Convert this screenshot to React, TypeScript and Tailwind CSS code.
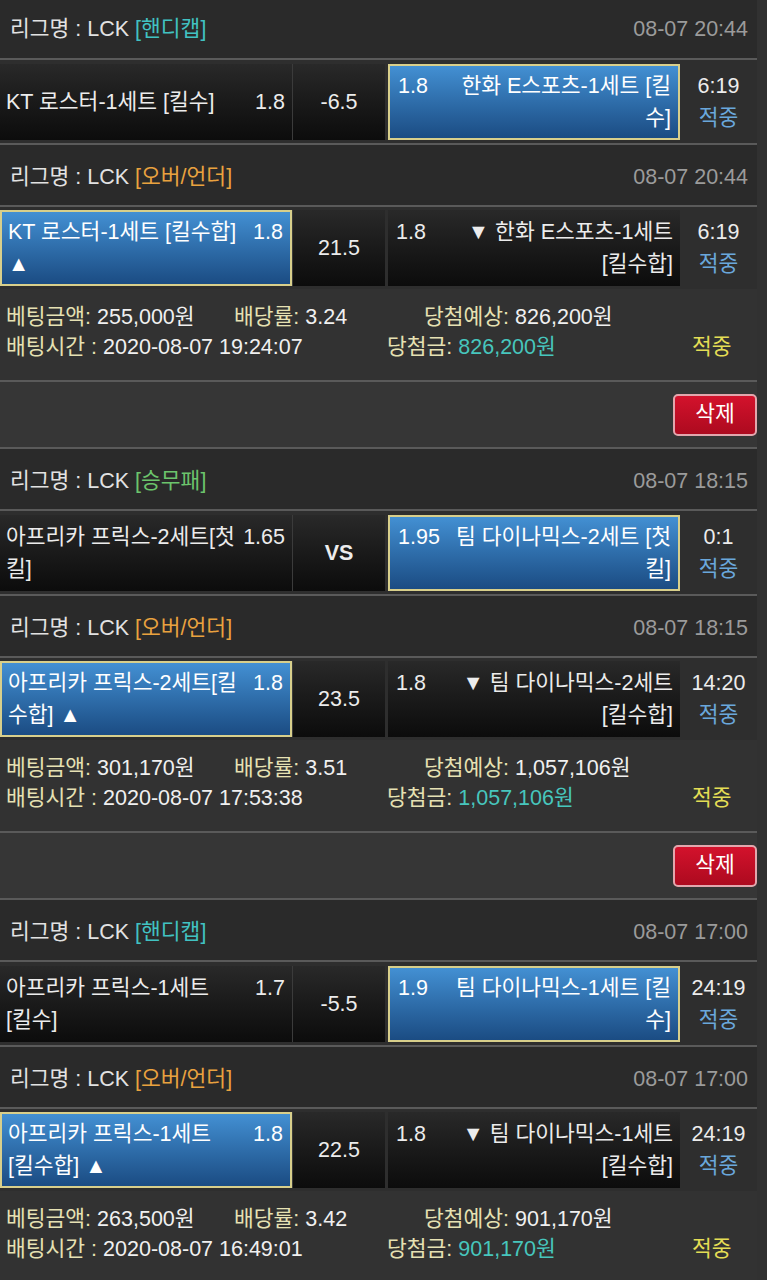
import React from 'react';

type Match = {
  tag: string;
  tagClass: string;
  date: string;
  left: string[];
  leftOdds: string;
  center: string;
  bold?: boolean;
  right: string[];
  rightOdds: string;
  pick: 'left' | 'right';
  score: string;
};

type Info = {
  amount: string;
  rate: string;
  expect: string;
  time: string;
  win: string;
};

type Block = { matches: [Match, Match]; info: Info };

const TEAL = 'text-[#41c2c2]';
const ORANGE = 'text-[#e9a23f]';
const GREEN = 'text-[#6cc46c]';

const blocks: Block[] = [
  {
    matches: [
      {
        tag: '핸디캡', tagClass: TEAL, date: '08-07 20:44',
        left: ['KT 로스터-1세트 [킬수]'], leftOdds: '1.8', center: '-6.5',
        right: ['한화 E스포츠-1세트 [킬', '수]'], rightOdds: '1.8', pick: 'right', score: '6:19',
      },
      {
        tag: '오버/언더', tagClass: ORANGE, date: '08-07 20:44',
        left: ['KT 로스터-1세트 [킬수합]', '▲'], leftOdds: '1.8', center: '21.5',
        right: ['▼ 한화 E스포츠-1세트', '[킬수합]'], rightOdds: '1.8', pick: 'left', score: '6:19',
      },
    ],
    info: { amount: '255,000원', rate: '3.24', expect: '826,200원', time: '2020-08-07 19:24:07', win: '826,200원' },
  },
  {
    matches: [
      {
        tag: '승무패', tagClass: GREEN, date: '08-07 18:15',
        left: ['아프리카 프릭스-2세트[첫', '킬]'], leftOdds: '1.65', center: 'VS', bold: true,
        right: ['팀 다이나믹스-2세트 [첫', '킬]'], rightOdds: '1.95', pick: 'right', score: '0:1',
      },
      {
        tag: '오버/언더', tagClass: ORANGE, date: '08-07 18:15',
        left: ['아프리카 프릭스-2세트[킬', '수합] ▲'], leftOdds: '1.8', center: '23.5',
        right: ['▼ 팀 다이나믹스-2세트', '[킬수합]'], rightOdds: '1.8', pick: 'left', score: '14:20',
      },
    ],
    info: { amount: '301,170원', rate: '3.51', expect: '1,057,106원', time: '2020-08-07 17:53:38', win: '1,057,106원' },
  },
  {
    matches: [
      {
        tag: '핸디캡', tagClass: TEAL, date: '08-07 17:00',
        left: ['아프리카 프릭스-1세트', '[킬수]'], leftOdds: '1.7', center: '-5.5',
        right: ['팀 다이나믹스-1세트 [킬', '수]'], rightOdds: '1.9', pick: 'right', score: '24:19',
      },
      {
        tag: '오버/언더', tagClass: ORANGE, date: '08-07 17:00',
        left: ['아프리카 프릭스-1세트', '[킬수합] ▲'], leftOdds: '1.8', center: '22.5',
        right: ['▼ 팀 다이나믹스-1세트', '[킬수합]'], rightOdds: '1.8', pick: 'left', score: '24:19',
      },
    ],
    info: { amount: '263,500원', rate: '3.42', expect: '901,170원', time: '2020-08-07 16:49:01', win: '901,170원' },
  },
];

const DARK = 'bg-linear-to-b from-[#292929] to-[#0c0c0c] text-[#ececec]';
const BLUE = 'border-2 border-[#d8cf8b] bg-linear-to-b from-[#4390d3] to-[#1b4c83] text-white';

const Header: React.FC<{ m: Match; first?: boolean }> = ({ m, first }) => (
  <div
    className={`flex items-center justify-between border-b-2 border-[#5a5a5a] bg-[#2a2a2a] pl-[10px] pr-[9px] ${first ? 'h-[60px] pt-[1px]' : 'h-[62px] pt-[4px]'}`}
  >
    <span className="text-[#e2e2e2]">
      리그명 : LCK <span className={m.tagClass}>[{m.tag}]</span>
    </span>
    <span className="text-[#9b9b9b]">{m.date}</span>
  </div>
);

const MatchRow: React.FC<{ m: Match; bordered: boolean }> = ({ m, bordered }) => (
  <div
    className={`flex items-center bg-[#2e2e2e] leading-[32px] ${bordered ? 'h-[85px] border-b-2 border-[#5a5a5a]' : 'h-[82px]'}`}
  >
    {/* home side */}
    <div className={`flex h-[76px] w-[292px] items-center ${m.pick === 'left' ? BLUE : DARK}`}>
      <div className="flex w-full items-start justify-between pl-[6px] pr-[7px]">
        <div className="whitespace-nowrap">
          {m.left.map((l) => (
            <div key={l}>{l}</div>
          ))}
        </div>
        <div>{m.leftOdds}</div>
      </div>
    </div>
    {/* handicap / total */}
    <div
      className={`flex h-[76px] w-[93px] items-center justify-center border-l border-[#3b3b3b] ${DARK} ${m.bold ? 'font-bold' : ''}`}
    >
      {m.center}
    </div>
    {/* away side */}
    <div className={`ml-[3px] flex h-[76px] w-[292px] items-center ${m.pick === 'right' ? BLUE : DARK}`}>
      <div className="flex w-full items-start justify-between pl-[8px] pr-[7px]">
        <div>{m.rightOdds}</div>
        <div className="whitespace-nowrap text-right">
          {m.right.map((l) => (
            <div key={l}>{l}</div>
          ))}
        </div>
      </div>
    </div>
    <div className="flex w-[77px] flex-col items-center">
      <span className="text-[#ececec]">{m.score}</span>
      <span className="text-[#6aa7db]">적중</span>
    </div>
  </div>
);

const Label: React.FC<{ children: React.ReactNode }> = ({ children }) => (
  <span className="text-[#e6e1b3]">{children}</span>
);

const InfoRows: React.FC<{ info: Info; last: boolean }> = ({ info, last }) => (
  <div
    className={`bg-[#323232] px-[6px] pt-[13px] leading-[30px] text-[#f0f0f0] ${last ? 'pb-[30px]' : 'border-b-2 border-[#5a5a5a] pb-[18px]'}`}
  >
    <div className="flex whitespace-nowrap">
      <span className="w-[228px]">
        <Label>베팅금액:</Label> {info.amount}
      </span>
      <span className="w-[190px]">
        <Label>배당률:</Label> {info.rate}
      </span>
      <span>
        <Label>당첨예상:</Label> {info.expect}
      </span>
    </div>
    <div className="flex whitespace-nowrap">
      <span className="w-[381px]">
        <Label>배팅시간 :</Label> {info.time}
      </span>
      <span className="w-[305px]">
        <Label>당첨금:</Label> <span className="text-[#47c6bd]">{info.win}</span>
      </span>
      <span className="text-[#e4dd55]">적중</span>
    </div>
  </div>
);

const DeleteRow: React.FC = () => (
  <div className="flex h-[67px] items-center justify-end border-b-2 border-[#5a5a5a] bg-[#363636]">
    <button className="flex h-[42px] w-[84px] items-center justify-center rounded-[5px] border-2 border-[#e2a6ad] bg-linear-to-b from-[#d3122c] to-[#ad0a1f] text-white">
      삭제
    </button>
  </div>
);

const App: React.FC = () => {
  return (
    <div className="min-h-screen bg-[#313131] font-['Liberation_Sans','Noto_Sans_CJK_KR',sans-serif] text-[21.5px]">
      <div className="w-[757px]">
        {blocks.map((b, i) => {
          const last = i === blocks.length - 1;
          return (
            <div key={i}>
              <Header m={b.matches[0]} first={i === 0} />
              <MatchRow m={b.matches[0]} bordered />
              <Header m={b.matches[1]} />
              <MatchRow m={b.matches[1]} bordered={false} />
              <InfoRows info={b.info} last={last} />
              {!last && <DeleteRow />}
            </div>
          );
        })}
      </div>
    </div>
  );
};

export default App;
